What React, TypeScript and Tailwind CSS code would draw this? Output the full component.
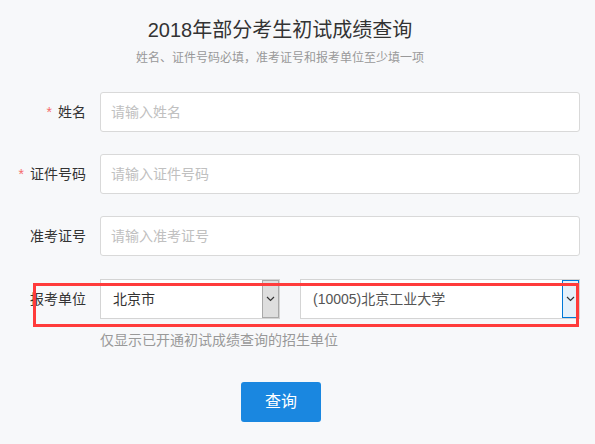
import React from 'react';

const font = { fontFamily: '"Liberation Sans", "Noto Sans CJK SC", sans-serif' };

const Chevron: React.FC = () => (
    <svg width="9" height="6" viewBox="0 0 9 6" fill="none">
        <path d="M1 1l3.5 3.5L8 1" stroke="#333" strokeWidth="1.2" />
    </svg>
);

const Field: React.FC<{ label: string; required?: boolean; placeholder: string }> = ({ label, required, placeholder }) => (
    <div className="flex items-center h-[40px]">
        <div className="w-[86px] text-right text-[14px] text-[#333] whitespace-nowrap">
            {required && <span className="text-[#f56c6c] mr-[6px]">*</span>}
            {label}
        </div>
        <div className="ml-[14px] w-[480px] h-[40px] bg-white border border-[#d9d9d9] rounded-[3px] flex items-center pl-[10px] text-[14px] text-[#c0c0c0]">
            {placeholder}
        </div>
    </div>
);

const App: React.FC = () => {
    return (
        <div className="relative w-[595px] h-[444px] bg-[#f7f8fa] overflow-hidden" style={font}>
            <div className="w-[560px] pt-[17px] h-[43px] text-center text-[20px] leading-[26px] text-[#333]">
                2018年部分考生初试成绩查询
            </div>
            <div className="w-[560px] mt-[6px] h-[18px] text-center text-[12px] leading-[18px] text-[#999]">
                姓名、证件号码必填，准考证号和报考单位至少填一项
            </div>

            {/* form rows */}
            <div className="mt-[25px] flex flex-col gap-[22px]">
                <Field label="姓名" required placeholder="请输入姓名" />
                <Field label="证件号码" required placeholder="请输入证件号码" />
                <Field label="准考证号" placeholder="请输入准考证号" />

                <div className="flex items-center h-[40px] mt-[1px]">
                    <div className="w-[86px] text-right text-[14px] text-[#333]">报考单位</div>
                    <div className="ml-[14px] w-[180px] h-[40px] bg-white border border-[#d4d4d4] flex items-stretch">
                        <div className="flex-1 flex items-center pl-[12px] text-[14px] text-[#333]">北京市</div>
                        <div className="w-[17px] bg-[#dedede] border border-[#a9a9a9] flex items-center justify-center">
                            <Chevron />
                        </div>
                    </div>
                    <div className="ml-[20px] w-[280px] h-[40px] bg-white border border-[#d4d4d4] flex items-stretch">
                        <div className="flex-1 flex items-center pl-[12px] text-[14px] text-[#555]">(10005)北京工业大学</div>
                        <div className="w-[17px] bg-[#e5f1fb] border border-[#0078d7] flex items-center justify-center">
                            <Chevron />
                        </div>
                    </div>
                </div>
            </div>

            <div className="mt-[11px] ml-[100px] text-[14px] leading-[20px] text-[#999]">
                仅显示已开通初试成绩查询的招生单位
            </div>

            <div className="mt-[32px] ml-[241px]">
                <button className="w-[80px] h-[40px] bg-[#1a87e0] rounded-[3px] text-white text-[16px]">查询</button>
            </div>

            {/* red annotation box over the unit row */}
            <div className="absolute left-[33px] top-[283px] w-[546px] h-[44px] border-[3px] border-[#ff3b3b]" />
        </div>
    );
};

export default App;
